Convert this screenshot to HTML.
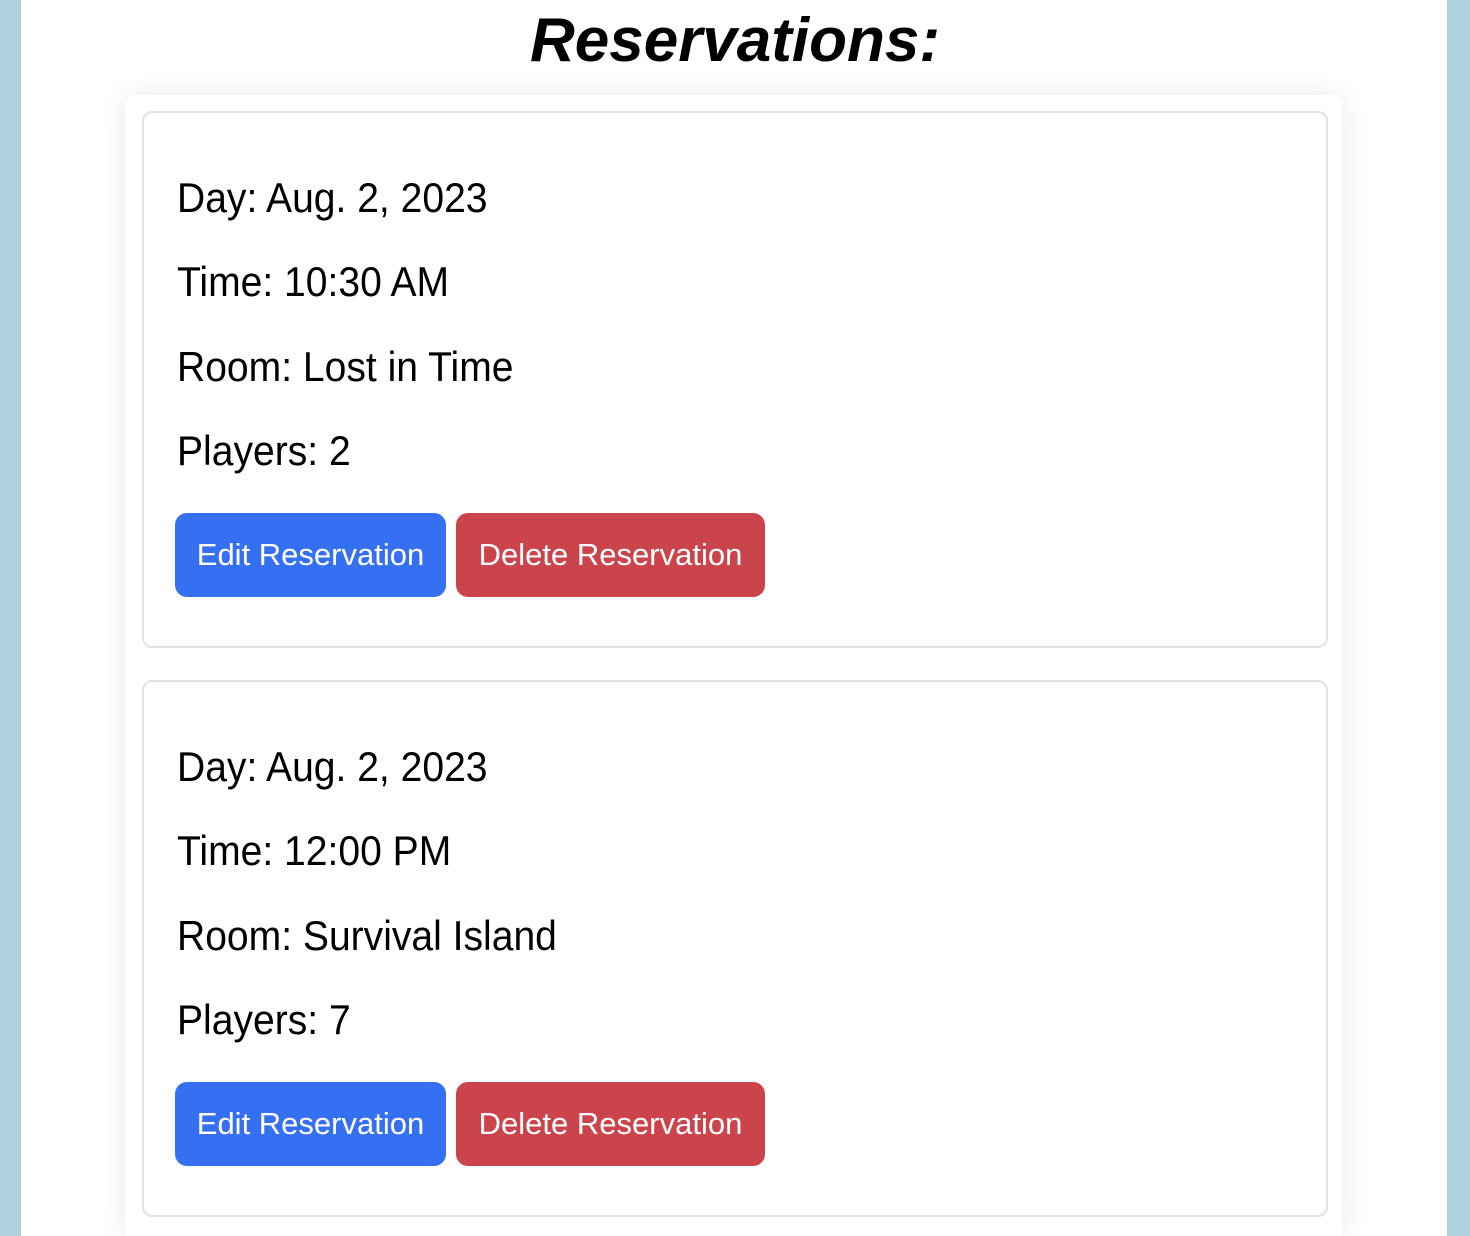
<!DOCTYPE html>
<html><head><style>
html,body{margin:0;width:1470px;height:1236px;overflow:hidden}
body{background:#aed1de;font-family:"Liberation Sans",sans-serif;position:relative}
.main{position:absolute;left:21px;top:0;width:1426px;height:1236px;background:#fff}
h1{position:absolute;left:0;width:1470px;top:0;margin:0;text-align:center;font-size:62px;font-style:italic;font-weight:bold;line-height:82px;color:#000}
.wrap{position:absolute;left:125px;top:95px;width:1217px;height:1141px;background:#fff;border-radius:10px 10px 0 0;box-shadow:0 0 30px rgba(0,0,0,.09)}
.card{position:absolute;left:142px;width:1182px;height:533px;border:2px solid #dfe2e6;border-radius:10px;background:#fff}
.l{position:absolute;left:33px;font-size:42px;line-height:50px;white-space:nowrap;transform:scale(.93,1);transform-origin:left center;color:#000}
.b{position:absolute;top:400px;height:84px;border-radius:12px;color:#fff;font-size:31px;line-height:84px;text-align:center}
.e{left:31px;width:271px;background:#3570f2}
.d{left:312px;width:309px;background:#cb444b}
</style></head><body>
<div class="main"></div>
<h1>Reservations:</h1>
<div class="wrap"></div>
<div class="card" style="top:111px">
<div class="l" style="top:60px">Day: Aug. 2, 2023</div>
<div class="l" style="top:144px">Time: 10:30 AM</div>
<div class="l" style="top:229px">Room: Lost in Time</div>
<div class="l" style="top:313px">Players: 2</div>
<div class="b e">Edit Reservation</div><div class="b d">Delete Reservation</div>
</div>
<div class="card" style="top:680px">
<div class="l" style="top:60px">Day: Aug. 2, 2023</div>
<div class="l" style="top:144px">Time: 12:00 PM</div>
<div class="l" style="top:229px">Room: Survival Island</div>
<div class="l" style="top:313px">Players: 7</div>
<div class="b e">Edit Reservation</div><div class="b d">Delete Reservation</div>
</div>
</body></html>
